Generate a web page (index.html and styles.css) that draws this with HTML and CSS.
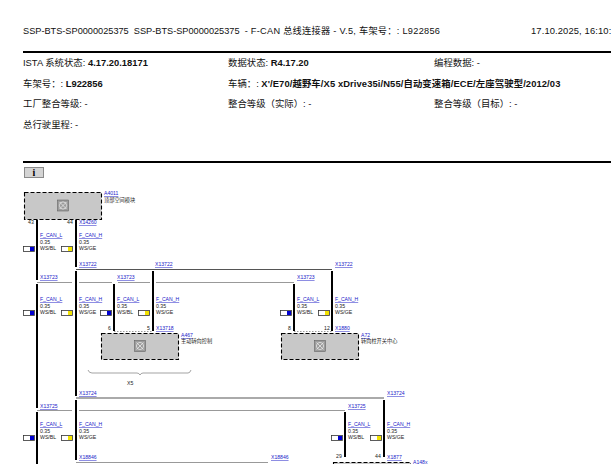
FILE: index.html
```html
<!DOCTYPE html>
<html lang="zh">
<head>
<meta charset="utf-8">
<title>SSP-BTS-SP0000025375</title>
<link rel="stylesheet" href="styles.css">
</head>
<body>
<header class="title-row">
  <span class="title">SSP-BTS-SP0000025375&nbsp; SSP-BTS-SP0000025375&nbsp; <span class="tail">- F-CAN 总线连接器 - V.5, 车架号：: L922856</span></span>
  <span class="date">17.10.2025, 16:10:</span>
</header>
<section class="info">
  <div>ISTA 系统状态: <b>4.17.20.18171</b></div>
  <div>数据状态: <b>R4.17.20</b></div>
  <div>编程数据: -</div>
  <div>车架号：: <b>L922856</b></div>
  <div class="wide">车辆：: <b class="long">X'/E70/越野车/X5 xDrive35i/N55/自动变速箱/ECE/左座驾驶型/2012/03</b></div>
  <div>工厂整合等级: -</div>
  <div>整合等级（实际）: -</div>
  <div>整合等级（目标）: -</div>
  <div class="full">总行驶里程: -</div>
</section>
<div class="toolbar"><button class="info-btn" type="button">i</button></div>
<svg class="diagram" viewBox="0 178 611 286" width="611" height="286" xmlns="http://www.w3.org/2000/svg">
  <defs>
    <g id="ecu">
      <rect class="ecu-back" x="-5.5" y="-5.5" width="11" height="11"/>
      <circle class="ecu-line" cx="0" cy="0" r="3.6"/>
      <path class="ecu-line" d="M-3.5 -3.5L3.5 3.5M3.5 -3.5L-3.5 3.5"/>
    </g>
    <g id="sw-bl"><rect class="sw" x="0.5" y="0.5" width="11" height="5"/><rect class="blue" x="7" y="1" width="4" height="4"/></g>
    <g id="sw-ge"><rect class="sw" x="0.5" y="0.5" width="11" height="5"/><rect class="yellow" x="7" y="1" width="4" height="4"/></g>
  </defs>

  <!-- buses -->
  <path class="bus thin" d="M76 269.5H332"/>
  <path class="bus mid" d="M37 282.5H72M79 282.5H112M118 282.5H150M156 282.5H294"/>
  <path class="bus thick" d="M76 398H384"/>
  <path class="bus mid" d="M37 410.5H72M79 410.5H345"/>
  <path class="bus mid" d="M76 462.5H268"/>

  <!-- wires -->
  <path class="wire" d="M37 220V280M37 284V408M37 412V464"/>
  <path class="wire" d="M76 220V267M76 271V396M76 400V460"/>
  <path class="wire" d="M114 284V331M153 271V331M294 284V331M332 271V331M345 412V457M384 400V457"/>

  <!-- modules -->
  <rect class="module" x="24.5" y="192.5" width="77" height="27"/>
  <use href="#ecu" x="63" y="205.5"/>
  <rect class="module" x="101.5" y="333.5" width="77" height="26"/>
  <use href="#ecu" x="140" y="346"/>
  <rect class="module" x="281.5" y="333.5" width="77" height="26"/>
  <use href="#ecu" x="320" y="346"/>
  <rect class="module" x="333.5" y="462.5" width="77" height="26"/>
  <path class="stub" d="M114 331.5H153M294 331.5H332"/>

  <!-- brace -->
  <path class="brace" d="M88 370Q89 373 92 373H137Q139 373 140 375Q141 373 143 373H188Q190 373 191 370"/>
  <text class="tiny" x="127" y="385">X5</text>

  <!-- swatches -->
  <use href="#sw-bl" x="23" y="246"/><use href="#sw-ge" x="61" y="246"/>
  <use href="#sw-bl" x="23" y="310"/><use href="#sw-ge" x="61" y="310"/>
  <use href="#sw-bl" x="100" y="310"/><use href="#sw-ge" x="138" y="310"/>
  <use href="#sw-bl" x="280" y="310"/><use href="#sw-ge" x="318" y="310"/>
  <use href="#sw-bl" x="23" y="435"/><use href="#sw-ge" x="61" y="435"/>
  <use href="#sw-bl" x="331" y="435"/><use href="#sw-ge" x="370" y="435"/>

  <!-- connector links -->
  <text class="link" x="104" y="195">A4011</text>
  <text class="tiny" x="104" y="202">顶部空间模块</text>
  <text class="tiny" x="28" y="224">43</text>
  <text class="tiny" x="67" y="224">44</text>
  <text class="link" x="79" y="224">X14260</text>
  <text class="link" x="79" y="266">X13722</text>
  <text class="link" x="155" y="266">X13722</text>
  <text class="link" x="335" y="266">X13722</text>
  <text class="link" x="40" y="279">X13723</text>
  <text class="link" x="117" y="279">X13723</text>
  <text class="link" x="297" y="279">X13723</text>
  <text class="tiny" x="108" y="330">6</text>
  <text class="tiny" x="147" y="330">5</text>
  <text class="link" x="156" y="330">X13718</text>
  <text class="link" x="181" y="337">A467</text>
  <text class="tiny" x="181" y="343">主动转向控制</text>
  <text class="tiny" x="288" y="330">8</text>
  <text class="tiny" x="324" y="330">12</text>
  <text class="link" x="335" y="330">X1880</text>
  <text class="link" x="361" y="337">A72</text>
  <text class="tiny" x="361" y="343">转向柱开关中心</text>
  <text class="link" x="79" y="395">X13724</text>
  <text class="link" x="387" y="395">X13724</text>
  <text class="link" x="40" y="408">X13725</text>
  <text class="link" x="348" y="408">X13725</text>
  <text class="link" x="79" y="459">X18846</text>
  <text class="link" x="271" y="459">X18846</text>
  <text class="tiny" x="336" y="458">29</text>
  <text class="tiny" x="375" y="458">44</text>
  <text class="link" x="387" y="459">X1877</text>
  <text class="link" x="413" y="464">A148x</text>

  <!-- wire labels -->
  <g><text class="link" x="40" y="237">F_CAN_L</text><text class="tiny" x="40" y="244">0.35</text><text class="tiny" x="40" y="250">WS/BL</text></g>
  <g><text class="link" x="79" y="237">F_CAN_H</text><text class="tiny" x="79" y="244">0.35</text><text class="tiny" x="79" y="250">WS/GE</text></g>
  <g><text class="link" x="40" y="301">F_CAN_L</text><text class="tiny" x="40" y="308">0.35</text><text class="tiny" x="40" y="314">WS/BL</text></g>
  <g><text class="link" x="79" y="301">F_CAN_H</text><text class="tiny" x="79" y="308">0.35</text><text class="tiny" x="79" y="314">WS/GE</text></g>
  <g><text class="link" x="117" y="301">F_CAN_L</text><text class="tiny" x="117" y="308">0.35</text><text class="tiny" x="117" y="314">WS/BL</text></g>
  <g><text class="link" x="156" y="301">F_CAN_H</text><text class="tiny" x="156" y="308">0.35</text><text class="tiny" x="156" y="314">WS/GE</text></g>
  <g><text class="link" x="297" y="301">F_CAN_L</text><text class="tiny" x="297" y="308">0.35</text><text class="tiny" x="297" y="314">WS/BL</text></g>
  <g><text class="link" x="335" y="301">F_CAN_H</text><text class="tiny" x="335" y="308">0.35</text><text class="tiny" x="335" y="314">WS/GE</text></g>
  <g><text class="link" x="40" y="426">F_CAN_L</text><text class="tiny" x="40" y="433">0.35</text><text class="tiny" x="40" y="439">WS/BL</text></g>
  <g><text class="link" x="79" y="426">F_CAN_H</text><text class="tiny" x="79" y="433">0.35</text><text class="tiny" x="79" y="439">WS/GE</text></g>
  <g><text class="link" x="348" y="426">F_CAN_L</text><text class="tiny" x="348" y="433">0.35</text><text class="tiny" x="348" y="439">WS/BL</text></g>
  <g><text class="link" x="387" y="426">F_CAN_H</text><text class="tiny" x="387" y="433">0.35</text><text class="tiny" x="387" y="439">WS/GE</text></g>
</svg>
</body>
</html>
```
FILE: styles.css
```css
html, body {
  margin: 0;
  padding: 0;
  background: #fff;
  overflow: hidden;
  height: 464px;
}
body {
  width: 611px;
  font-family: "Liberation Sans", "Noto Sans CJK SC", sans-serif;
  font-size: 9.4px;
  color: #111;
}
.title-row {
  display: flex;
  height: 51px;
  box-sizing: border-box;
  padding: 25px 0 0 23px;
  line-height: 12px;
  white-space: nowrap;
}
.title { width: 508px; flex: none; font-size: 9.2px; }
.tail { letter-spacing: 0.28px; }
.date { flex: none; letter-spacing: 0.12px; }
.info {
  display: grid;
  grid-template-columns: 205px 206px 1fr;
  grid-auto-rows: 20.7px;
  margin-left: 23px;
  height: 112px;
  box-sizing: border-box;
  padding-top: 4px;
  border-top: 2px solid #000;
  border-bottom: 2px solid #000;
  line-height: 12px;
  white-space: nowrap;
}
.info b { font-weight: 700; }
.info .long { letter-spacing: 0.1px; }
.info .wide { grid-column: span 2; }
.info .full { grid-column: 1 / -1; }
.toolbar {
  height: 15px;
  padding: 4px 0 0 24px;
  box-sizing: border-box;
}
.info-btn {
  display: block;
  width: 20px;
  height: 11px;
  padding: 0;
  border: 1px solid #8a8a8a;
  background: #d4d4d4;
  color: #000;
  font-family: "Liberation Serif", serif;
  font-weight: 700;
  font-size: 10px;
  line-height: 9px;
}
.diagram { display: block; }
.bus { fill: none; stroke: #777; }
.bus.thin { stroke: #555; stroke-width: 1; }
.bus.mid { stroke: #999; stroke-width: 1; }
.bus.thick { stroke: #aaa; stroke-width: 2; }
.wire { fill: none; stroke: #000; stroke-width: 2; }
.module {
  fill: #c8c8c8;
  stroke: #000;
  stroke-width: 1.1;
  stroke-dasharray: 4 2;
}
.ecu-back { fill: #9c9c9c; stroke: #555; stroke-width: 0.5; }
.ecu-line { fill: none; stroke: #e8e8e8; stroke-width: 0.8; }
.stub { fill: none; stroke: #555; stroke-width: 0.6; stroke-dasharray: 1.5 1.5; }
.brace { fill: none; stroke: #666; stroke-width: 0.6; }
.sw { fill: #fff; stroke: #333; stroke-width: 0.8; }
.blue { fill: #0000d0; }
.yellow { fill: #f2e200; }
.tiny {
  font-size: 5.2px;
  fill: #222;
}
.link {
  font-size: 5.1px;
  fill: #2222c8;
  text-decoration: underline;
}
```
